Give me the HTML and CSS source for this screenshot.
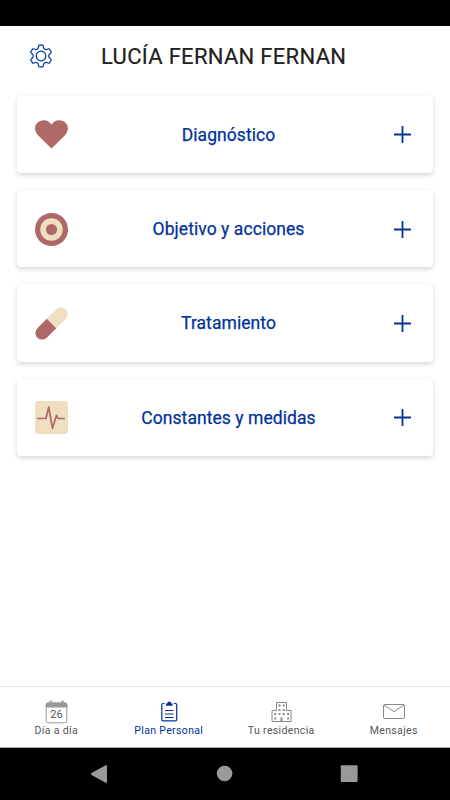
FILE: index.html
```html
<!DOCTYPE html>
<html lang="es">
<head>
    <meta charset="UTF-8">
    <title>Plan Personal</title>
    <link rel="stylesheet" href="styles.css">
</head>
<body>

<div class="statusbar"></div>

<header class="header">
    <svg class="gear" viewBox="0 0 24 24">
        <path d="M9.600 1.800Q9.800 1.200 10.400 1.200h3.200q.6 0 .7.6l.5 2.700 2.200 1.200 2.600-.9q.6-.2.9.3l1.700 2.900q.3.500-.2.900l-2.100 1.800v2.600l2.100 1.800q.5.400.2.900l-1.700 2.900q-.3.500-.9.300l-2.600-.9-2.200 1.200-.5 2.700q-.1.600-.7.600h-3.200q-.6 0-.8-.6l-.4-2.700L7 18.300l-2.600.9q-.6.200-.9-.3L1.800 16q-.3-.5.200-.9l2.100-1.800v-2.600L2 8.900q-.5-.4-.2-.9l1.700-2.900q.3-.5.900-.3L7 5.700l2.200-1.200z"/>
        <circle cx="12" cy="12" r="4.800"/>
    </svg>
    <h1>LUCÍA FERNAN FERNAN</h1>
</header>

<main class="cards">
    <section class="card">
        <svg class="card-icon" viewBox="0 0 33 33">
            <path fill="#ad6867" d="M16.500 30.500 3 17.200C-1 13-.8 7.400 2.700 4.500 6.800 1 13.200 1.200 16.500 6.500 19.800 1.200 26.200 1 30.300 4.500 33.800 7.400 34 13 30 17.200z"/>
        </svg>
        <h2>Diagnóstico</h2>
        <svg class="plus" viewBox="0 0 17 17"><path d="M8.500 0v17M0 8.500h17"/></svg>
    </section>

    <section class="card">
        <svg class="card-icon" viewBox="0 0 33 33">
            <circle cx="16.500" cy="16.500" r="16.500" fill="#ad6867"/>
            <circle cx="16.500" cy="16.500" r="11.200" fill="#efdfc0"/>
            <circle cx="16.500" cy="16.500" r="5.600" fill="#ad6867"/>
        </svg>
        <h2>Objetivo y acciones</h2>
        <svg class="plus" viewBox="0 0 17 17"><path d="M8.500 0v17M0 8.500h17"/></svg>
    </section>

    <section class="card">
        <svg class="card-icon" viewBox="0 0 33 33">
            <g transform="rotate(45 16.500 16.500)">
                <path fill="#efdfc0" d="M9.800 16.500V3.200a6.700 6.700 0 0 1 13.400 0v13.300z"/>
                <path fill="#ad6867" d="M9.800 16.500v13.300a6.700 6.700 0 0 0 13.400 0V16.500z"/>
            </g>
        </svg>
        <h2>Tratamiento</h2>
        <svg class="plus" viewBox="0 0 17 17"><path d="M8.500 0v17M0 8.500h17"/></svg>
    </section>

    <section class="card">
        <svg class="card-icon" viewBox="0 0 33 33">
            <rect width="33" height="33" rx="3" fill="#efdfc0"/>
            <path fill="none" stroke="#ad6867" stroke-width="1.700" stroke-linejoin="round" d="M2 17.500h9L13.700 6l3.800 21.300 4-13 1.500 3.200h6.800"/>
        </svg>
        <h2>Constantes y medidas</h2>
        <svg class="plus" viewBox="0 0 17 17"><path d="M8.500 0v17M0 8.500h17"/></svg>
    </section>
</main>

<nav class="tabs">
    <a class="tab">
        <svg viewBox="0 0 24 24">
            <rect x="2.200" y="3" width="20.600" height="19.800" rx="2.200" fill="none" stroke="#999" stroke-width="1"/>
            <path fill="#999" d="M1.700 7.500V4.500a2 2 0 0 1 2-2h2V.5h2v2h9.800v-2h2v2h1.800a2 2 0 0 1 2 2v3z"/>
            <text class="day" x="12.500" y="17.700">26</text>
        </svg>
        <span>Día a día</span>
    </a>
    <a class="tab active">
        <svg viewBox="0 0 24 24">
            <path fill="none" stroke="#003399" stroke-width="1.200" d="M7.500 3.500H5.800a1 1 0 0 0-1 1v15.300a1 1 0 0 0 1 1h12.900a1 1 0 0 0 1-1V4.500a1 1 0 0 0-1-1H17"/>
            <path fill="#003399" d="M9 5.800V3.500h1.300a2 2 0 0 1 4 0h1.300v2.300z"/>
            <path fill="none" stroke="#003399" d="M8 10.500h8.500M8 14h8.500M8 17.500h8.500"/>
        </svg>
        <span>Plan Personal</span>
    </a>
    <a class="tab">
        <svg viewBox="0 0 24 24">
            <path fill="none" stroke="#888" d="M3 21.500V10.500h4.500v-8h10v8H22v11z"/>
            <path fill="none" stroke="#888" stroke-width="2" stroke-dasharray="2 2.300" d="M9.500 5.500h6.300M9.500 10h6.300M5.200 14h15.100M5.200 18.500h2M18.100 18.500h2"/>
            <path stroke="#888" stroke-width="2" d="M12.500 17.500v4"/>
        </svg>
        <span>Tu residencia</span>
    </a>
    <a class="tab">
        <svg viewBox="0 0 24 24">
            <rect x="1.500" y="4.500" width="21" height="14" rx="1.500" fill="none" stroke="#888"/>
            <path fill="none" stroke="#888" d="m2 5 10 6.700L22 5"/>
        </svg>
        <span>Mensajes</span>
    </a>
</nav>

<footer class="sysbar">
    <svg viewBox="0 0 20 20"><path d="M18 2v16Q18 19.500 16.700 18.700L2.500 11Q1.300 10 2.500 9L16.700 1.200Q18 .500 18 2z"/></svg>
    <svg viewBox="0 0 20 20"><circle cx="10.600" cy="9.500" r="7.800"/></svg>
    <svg viewBox="0 0 20 20"><rect x="1.800" y="1.300" width="16.800" height="16.800" rx="1"/></svg>
</footer>

</body>
</html>
```
FILE: styles.css
```css
* {
    box-sizing: border-box;
    margin: 0;
    padding: 0;
}

body {
    font-family: Roboto, "Liberation Sans", sans-serif;
    background-color: #fff;
    height: 100vh;
    display: flex;
    flex-direction: column;
    overflow: hidden;
}

.statusbar {
    height: 26px;
    background-color: #000;
}

.header {
    height: 69.7px;
    display: flex;
    align-items: center;
    padding: 0 29px 9px;
}

.gear {
    width: 24px;
    height: 24px;
    fill: none;
    stroke: #003399;
    stroke-width: 1.2;
    stroke-linejoin: round;
}

.header h1 {
    margin-left: 48px;
    padding-top: 2px;
    font-size: 22px;
    font-weight: 400;
    line-height: 26px;
    letter-spacing: 0.3px;
    color: #222;
    white-space: nowrap;
    -webkit-text-stroke: 0.2px #222;
}

.cards {
    flex: 1;
    display: flex;
    flex-direction: column;
    gap: 17px;
    padding: 0 17px 0 17.2px;
}

.card {
    height: 77.3px;
    display: flex;
    align-items: center;
    padding: 1px 22px 0 17.8px;
    background-color: #fff;
    border-radius: 4px;
    box-shadow: 0 2px 5px rgba(0, 0, 0, 0.17);
}

.card-icon {
    width: 33px;
    height: 33px;
    overflow: visible;
}

.card h2 {
    flex: 1;
    padding: 0 5px 0 0;
    text-align: center;
    font-size: 17.5px;
    font-weight: 400;
    letter-spacing: 0.06px;
    color: #003399;
    -webkit-text-stroke: 0.25px #003399;
}

.plus {
    width: 17px;
    height: 17px;
    stroke: #003399;
    stroke-width: 1.8;
}

.tabs {
    height: 62px;
    display: flex;
    border-top: 1px solid #e8e8e8;
    border-bottom: 1px solid #aaa;
}

.tab {
    flex: 1;
    display: flex;
    flex-direction: column;
    align-items: center;
    padding-top: 13px;
    color: #555;
    font-size: 10.5px;
    line-height: 13px;
    letter-spacing: 0.35px;
}

.tab svg {
    width: 24px;
    height: 24px;
}

.tab.active {
    color: #003399;
}

.day {
    font-size: 11px;
    letter-spacing: 0;
    text-anchor: middle;
    fill: #555;
}

.sysbar {
    height: 52px;
    display: flex;
    justify-content: space-between;
    padding: 16px 91px 0 89px;
    background-color: #000;
}

.sysbar svg {
    width: 20px;
    height: 20px;
    fill: #999;
}
```
